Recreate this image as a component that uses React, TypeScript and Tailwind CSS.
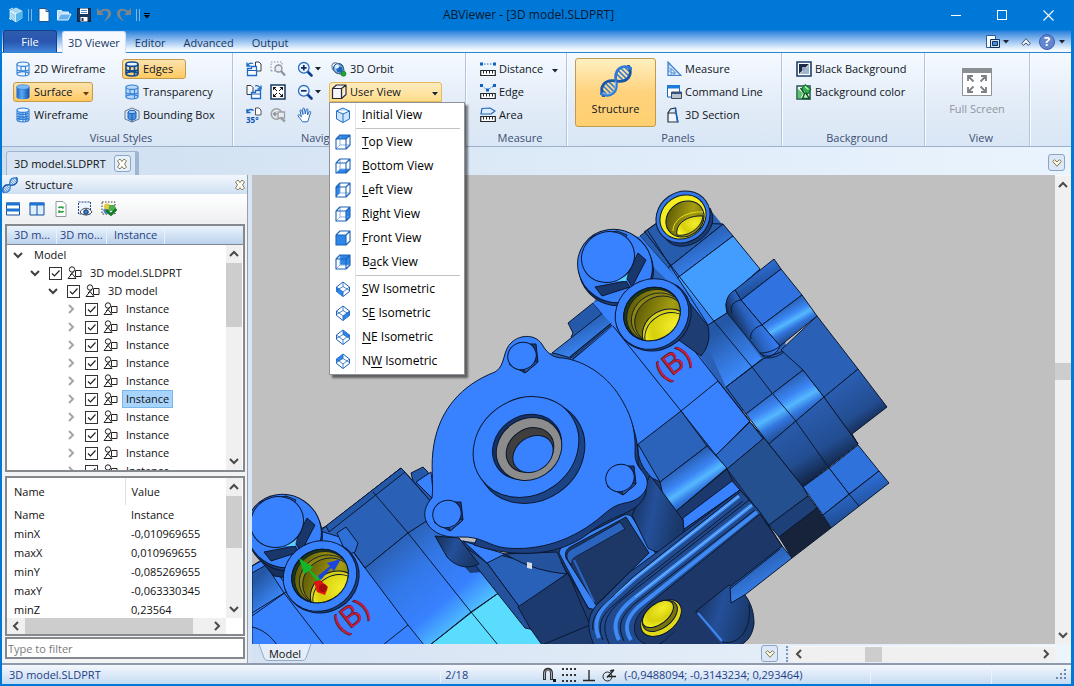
import type { ReactNode } from 'react';
import { useState } from 'react';

type IconProps = { children: ReactNode };

const Icon = ({ children }: IconProps) => (
  <svg viewBox="0 0 16 16" aria-hidden="true" fill="none" stroke="#1d63b8" className="size-4 shrink-0">
    {children}
  </svg>
);

/* ---------- ribbon icons ---------- */

const Barrel = ({ fill = 'none', grid = false, dark = false }: { fill?: string; grid?: boolean; dark?: boolean }) => (
  <Icon>
    <g stroke={dark ? '#0c4a94' : '#2f7fd6'} strokeWidth={dark ? 1.6 : 1.1}>
      <path d="M2 3.2v9.600c0 1.300 2.700 2.200 6 2.200s6-.9 6-2.200V3.200" fill={fill} />
      <ellipse cx="8" cy="3.200" rx="6" ry="2.200" fill={fill === 'none' ? '#eaf4ff' : fill} />
      <path d="M2 12.400c1-1.200 3-1.800 6-1.800s5 .6 6 1.800M6 5v5.600M10.500 5v9.500M2 9c3 1.200 9 1.200 12 0" />
      {grid && <path d="M4 4.500v9.500M8 5.500v9.500M12 4.500v9.500M2 6.500c3 1.200 9 1.200 12 0M2 11.500c3 1.200 9 1.200 12 0" />}
    </g>
  </Icon>
);

const SolidBarrel = () => (
  <Icon>
    <defs>
      <linearGradient id="solid">
        <stop offset="0" stopColor="#1565c8" />
        <stop offset=".4" stopColor="#5aa7f5" />
        <stop offset="1" stopColor="#0c4fae" />
      </linearGradient>
    </defs>
    <path d="M1.500 3v10c0 1.300 3 2.300 6.500 2.300s6.500-1 6.500-2.300V3z" fill="url(#solid)" stroke="none" />
    <ellipse cx="8" cy="3" rx="6.500" ry="2.300" fill="#7db9f7" stroke="#2b78d0" strokeWidth=".6" />
  </Icon>
);

const BoundingIcon = () => (
  <Icon>
    <path d="M1 4l7-3 7 3v8l-7 3-7-3z" stroke="#66788f" fill="#dceaf9" />
    <path d="M4 5v6c0 1 1.800 2 4 2s4-1 4-2V5z" fill="#4a90e2" stroke="#1d5fb4" />
    <ellipse cx="8" cy="5" rx="4" ry="1.600" fill="#a5cdf8" />
    <path d="M8 7v8" stroke="#1d5fb4" />
  </Icon>
);

const Pages = ({ kind }: { kind: 'up' | 'down' | 'angle' }) => (
  <Icon>
    {kind === 'angle' ? (
      <>
        <path d="M9.500 1h3.500l2 2v5H9.500z" fill="#fff" stroke="#4d5766" />
        <path d="M1 5c1.500-3 4.500-3 6.500-1.500M1 2v3.500h3.500" stroke="#1565c0" strokeWidth="1.400" />
        <text x="0" y="15.500" fontSize="8" fontWeight="700" fontFamily="Open Sans" fill="#0d55b5" stroke="none">35°</text>
      </>
    ) : kind === 'up' ? (
      <>
        <path d="M9.500 1h3.500l2 2v7H9.500z" fill="#fff" stroke="#333c4a" />
        <path d="M1.500 7.500h4v-2h5v9h-9z" fill="#fff" stroke="#1b6cc8" strokeWidth="1.300" />
        <path d="M1.500 9.500h9" />
        <path d="M1.500 4.500c1-2 3-3 5.500-2M1 1.500v3.500h3.500" stroke="#1565c0" strokeWidth="1.300" />
      </>
    ) : (
      <>
        <path d="M1 1.500h4l2 2v7H1z" fill="#fff" stroke="#333c4a" />
        <path d="M5.500 8.500h4v-2h5v8h-9z" fill="#fff" stroke="#1b6cc8" strokeWidth="1.300" />
        <path d="M5.500 10h9" />
        <path d="M9 2c2-.800 4 0 5 2M15 1.500v3.500h-3.500" stroke="#1565c0" strokeWidth="1.300" />
      </>
    )}
  </Icon>
);

const ZoomArea = () => (
  <Icon>
    <path d="M1 10V1h11v3" stroke="#8c9299" strokeDasharray="1.500 1.500" />
    <path d="M1 10h4" stroke="#8c9299" strokeDasharray="1.500 1.500" />
    <circle cx="8.500" cy="7.500" r="3.500" fill="#e8eef5" stroke="#8c9299" strokeWidth="1.300" />
    <path d="M11 10l4 4.500" stroke="#8c9299" strokeWidth="2.200" />
  </Icon>
);

const FitIcon = () => (
  <Icon>
    <path d="M1 1h14v14H1z" fill="#fff" stroke="#173a63" strokeWidth="1.500" />
    <path d="M3 3h3.500L3 6.500zM13 3H9.500L13 6.500zM3 13h3.500L3 9.500zM13 13H9.500L13 9.500z" fill="#111" stroke="none" />
    <path d="M4 4l3 3M12 4L9 7M4 12l3-3M12 12L9 9" stroke="#111" />
  </Icon>
);

const Magnifier = ({ plus = false }: { plus?: boolean }) => (
  <Icon>
    <path d="M10.500 10.500l4 4" stroke="#0e3f91" strokeWidth="2.600" strokeLinecap="round" />
    <circle cx="6.800" cy="6.800" r="5.300" fill="#eef6ff" stroke="#2c6fc0" strokeWidth="1.300" />
    <path d={plus ? 'M4 6.800h5.600M6.800 4v5.600' : 'M4 6.800h5.600'} stroke="#0b2c66" strokeWidth="1.700" />
  </Icon>
);

const PrevZoom = () => (
  <Icon>
    <circle cx="6.500" cy="7" r="5.300" fill="#e4e8ec" stroke="#9ba0a6" strokeWidth="1.500" />
    <path d="M3.500 7h4M5.500 5l-2 2 2 2" stroke="#8d9298" strokeWidth="1.300" />
    <path d="M8 5h6.500v6H8z" fill="#e9ecef" stroke="#9ba0a6" strokeWidth="1.300" />
    <path d="M10.500 10.500l4.500 4" stroke="#9ba0a6" strokeWidth="2.400" />
  </Icon>
);

const HandIcon = () => (
  <Icon>
    <path
      d="M5.500 14.800C4 12.500 2 10.500 1 8.800c-.3-1 .9-1.400 1.700-.6l1.800 1.600L3 4c-.2-1.200 1.300-1.400 1.700-.4L6 7.500 5.700 2c0-1.200 1.600-1.200 1.800 0L8.300 7l1-4.500c.3-1.100 1.700-.8 1.600.3L10.500 8l1.700-3.200c.6-.9 1.800-.4 1.500.6L12 10.500c-.4 1.700-.6 3-1.500 4.300z"
      fill="#fff"
      stroke="#2168c0"
    />
  </Icon>
);

const OrbitIcon = () => (
  <Icon>
    <circle cx="7.500" cy="7.500" r="5" fill="#8cc4f2" stroke="#123b6b" />
    <circle cx="8.500" cy="8.500" r="3" fill="#1d65b8" stroke="none" />
    <ellipse cx="7" cy="7.500" rx="7" ry="4.500" transform="rotate(40 7 7.500)" stroke="#55708e" />
    <circle cx="6" cy="5.500" r="2" fill="#e8f5ff" stroke="none" />
    <circle cx="12.500" cy="12.800" r="2.500" fill="#22a33a" stroke="#0f7323" strokeWidth=".6" />
  </Icon>
);

const BoxIcon = () => (
  <Icon>
    <path d="M1.500 4.500h9v10h-9zM1.500 4.500l4-3.500h9.500l-4.500 3.500M15 1v9.500l-4.500 4" fill="#f4f6fb" stroke="#2a2a33" strokeWidth="1.200" strokeLinejoin="round" />
  </Icon>
);

const RulerIcon = ({ kind }: { kind: 'distance' | 'edge' | 'area' }) => (
  <Icon>
    <path d="M.7 9.500h14.600v5H.7z" fill="#fff" stroke="#23272e" strokeWidth="1.200" />
    <path d="M3.500 9.500v3M6.500 9.500v3M9.500 9.500v3M12.500 9.500v3" stroke="#23272e" />
    {kind === 'distance' && (
      <>
        <path d="M1 3h14" strokeDasharray="1.500 1.500" />
        <path d="M0 1.500h3v3H0zM13 1.500h3v3h-3z" fill="#0f62c4" stroke="none" />
      </>
    )}
    {kind === 'edge' && (
      <>
        <path d="M2 2l5 4 7-4" strokeDasharray="1.500 1.500" />
        <path d="M0 0h3v3H0zM6 4.500h3v3H6zM13 0h3v3h-3z" fill="#0f62c4" stroke="none" />
      </>
    )}
    {kind === 'area' && <path d="M2 1.500l8-.5 5 3-4 3H1z" fill="#dcecff" strokeWidth="1.200" />}
  </Icon>
);

const DnaIcon = ({ big = false }: { big?: boolean }) => (
  <svg viewBox="0 0 32 32" aria-hidden="true" fill="none" className={big ? 'size-8 shrink-0' : 'size-4 shrink-0'}>
    <g transform="translate(16 16) rotate(-45)">
      <path d="M-16-3v6M-12.500-5.500v11M-9-6v12M-5.500-5v10M5.500-5v10M9-6v12M12.500-5.500v11M16-3v6" stroke="#3a7fd0" strokeWidth="1.600" />
      <path d="M-20 3c3-11 13-13 20-3s17 8 20-3" stroke="#1a55a6" strokeWidth="2.800" />
      <path d="M-20-3c3 11 13 13 20 3s17-8 20 3" stroke="#2e7ad4" strokeWidth="2.800" />
      <path d="M-18-1c3 8 11 9 17 1" stroke="#9cc8f5" strokeWidth=".8" />
    </g>
  </svg>
);

const TriangleRuler = () => (
  <Icon>
    <path d="M2 1v13.500h13z" fill="#cfe4fb" stroke="#3d7fcb" strokeWidth="1.200" />
    <path d="M5 7.500v4.500h4.500z" fill="#f5faff" stroke="#3d7fcb" />
    <path d="M2 4h1.500M2 7h1.500M2 10h1.500M5 14.500V13M8 14.500V13" stroke="#3d7fcb" />
  </Icon>
);

const CommandIcon = () => (
  <Icon>
    <path d="M1.500 2h12v11h-12z" fill="#fff" stroke="#1668c2" />
    <path d="M1 1h13v3.500H1z" fill="#1c7ad8" stroke="none" />
    <path d="M5.500 8h10v6.500h-10z" fill="#b9c3cf" stroke="#3b4a5c" />
    <path d="M5.500 8h10v2h-10z" fill="#35527a" stroke="none" />
  </Icon>
);

const SectionIcon = () => (
  <Icon>
    <path d="M2 6h8l2 9H2z" fill="#f1f4f8" stroke="#2b3038" strokeWidth="1.200" />
    <path d="M2 6l2.500-4L9.500 1v4" stroke="#2b3038" strokeWidth="1.200" />
    <path d="M9.500 1l2 14" stroke="#1263c8" strokeWidth="1.500" />
  </Icon>
);

const BlackBgIcon = () => (
  <Icon>
    <path d="M1 1h14v14H1z" fill="#fff" stroke="#1d3f6e" strokeWidth="1.600" />
    <path d="M3 3h10L3 13z" fill="#1c2b40" stroke="none" />
    <path d="M6 6h4v4H6z" fill="#8fa5c0" stroke="none" />
    <path d="M4 13h9V4z" fill="#9fb4cd" stroke="none" />
  </Icon>
);

const ColorBgIcon = () => (
  <Icon>
    <path d="M1 2h13v13H1z" fill="#fff" stroke="#1d5a4a" strokeWidth="1.500" />
    <path d="M2 5v9h3l2-5z" fill="#58c46a" stroke="none" />
    <path d="M6 4l3-3.500 6 4.500-3 5-4-1z" fill="#2fae4a" stroke="#14602a" />
    <path d="M9 2.500l3.500 3" stroke="#c5f3cc" strokeWidth="1.400" />
    <path d="M4.500 4l4 5.500-2 5h7l-4-6" stroke="#0c5121" strokeWidth="1.400" fill="#bff0c6" />
  </Icon>
);

const FullScreenIcon = () => (
  <svg viewBox="0 0 32 32" aria-hidden="true" fill="none" className="size-8 shrink-0">
    <path d="M1.500 2.500h29v27h-29z" fill="#fff" stroke="#8f9499" />
    <path d="M1 2h30v5H1z" fill="#8a8f94" />
    <path d="M7 15V10h5M7 10l5.500 5.500M25 15V10h-5M25 10l-5.500 5.500M7 21v5h5M7 26l5.500-5.500M25 21v5h-5M25 26l-5.500-5.500" stroke="#7c8186" strokeWidth="1.800" />
  </svg>
);

/* ---------- view cube icons ---------- */

const faces: Record<string, string> = {
  top: 'M1 5l4-4h10l-4 4z',
  bottom: 'M1 15l4-4h10l-4 4z',
  left: 'M1 5l4-4v10l-4 4z',
  right: 'M11 5l4-4v10l-4 4z',
  front: 'M1 5h10v10H1z',
  back: 'M5 1h10v10H5z',
  sw: 'M1.500 6v4.500L8 15.500V11z',
  se: 'M14.500 6v4.500L8 15.500V11z',
  ne: 'M8 1l6.500 5v3L8 5.500z',
  nw: 'M8 1L1.500 6v3L8 5.500z',
};

const ViewIcon = ({ face }: { face: string }) => {
  if (face === 'initial')
    return (
      <Icon>
        <path d="M8 1l6.500 3v8L8 15.500 1.500 12V4zM1.500 4L8 7l6.500-3M8 7v8.500" fill="#cfe3fa" stroke="#1f6fcb" strokeLinejoin="round" />
      </Icon>
    );
  if (face.length === 2)
    return (
      <Icon>
        <path d="M8 1l6.500 5v4.500L8 15.500 1.500 10.500V6z" fill="#fff" strokeLinejoin="round" />
        <path d={faces[face]} fill="#2f86e8" stroke="none" />
        <path d="M1.500 6L8 11l6.500-5M8 11v4.500M8 1v4.500M8 5.500l-6.500 4M8 5.500l6.500 4" strokeWidth=".8" />
      </Icon>
    );
  return (
    <Icon>
      <path d={faces[face]} fill="#2f86e8" stroke="none" />
      <path d="M5 1v10h10M5 11l-4 4" stroke={face === 'front' ? 'none' : '#7aaae0'} strokeWidth=".9" />
      <path d="M1 5h10v10H1zM1 5l4-4h10l-4 4M15 1v10l-4 4" strokeLinejoin="round" strokeWidth="1.100" />
    </Icon>
  );
};

/* ---------- shared pieces ---------- */

const Caret = ({ className = 'text-[#1b2430]' }: { className?: string }) => (
  <svg viewBox="0 0 6 4" aria-hidden="true" className={`h-1 w-1.5 shrink-0 ${className}`}>
    <path d="M0 0h6L3 3.500z" fill="currentColor" />
  </svg>
);

const Chevron = ({ dir, className = 'text-[#4a4a4a]' }: { dir: 'up' | 'down' | 'left' | 'right'; className?: string }) => {
  const d = { up: 'M1 7l4-4 4 4', down: 'M1 3l4 4 4-4', left: 'M7 1L3 5l4 4', right: 'M3 1l4 4-4 4' }[dir];
  return (
    <svg viewBox="0 0 10 10" aria-hidden="true" fill="none" className={`size-2.5 shrink-0 ${className}`}>
      <path d={d} stroke="currentColor" strokeWidth="2" />
    </svg>
  );
};

const CrossBadge = () => (
  <svg viewBox="0 0 10 10" aria-hidden="true" className="size-2.5">
    <path d="M.5 2L2 .5h1.500L5 2.500 6.500.5H8L9.500 2 7.500 5l2 3L8 9.500H6.500L5 7.500 3.500 9.500H2L.5 8l2-3z" fill="#fffef2" stroke="#6f6a55" strokeWidth=".9" />
  </svg>
);

const DownBadge = ({ label }: { label: string }) => (
  <button type="button" aria-label={label} className="flex size-[17px] items-center justify-center rounded-[3px] border border-[#8aa4c8] bg-[#dce8f6]">
    <svg viewBox="0 0 10 8" aria-hidden="true" className="h-2 w-2.5">
      <path d="M.7 2.500L2.500.7 5 3 7.500.7l1.800 1.800L5 7.300z" fill="#fffbe0" stroke="#6f6a4a" strokeWidth=".9" />
    </svg>
  </button>
);

const Cmd = ({ icon, children }: { icon: ReactNode; children: ReactNode }) => (
  <button type="button" className="flex h-5 items-center gap-[3px] rounded-[3px] border border-transparent px-px whitespace-nowrap">
    {icon}
    {children}
  </button>
);

const Group = ({ label, className, children }: { label: string; className: string; children: ReactNode }) => (
  <section aria-label={label} className={`flex shrink-0 flex-col border-r border-[#b4c4da] shadow-[1px_0_0_#f8fbff] ${className}`}>
    <div className="flex min-h-0 flex-1 pt-1">{children}</div>
    <h2 className="h-4 pl-2 text-center whitespace-nowrap text-[#3c4f72]">{label}</h2>
  </section>
);

const Col = ({ className = '', children }: { className?: string; children: ReactNode }) => (
  <div className={`flex flex-col items-start gap-[3px] pt-0.5 ${className}`}>{children}</div>
);

const hot = 'border-[#c29a4b] bg-linear-to-b from-[#fce3ac] to-[#ffc95f]';

/* ---------- title bar and ribbon ---------- */

const TitleBar = () => (
  <header className="grid h-[30px] shrink-0 grid-cols-[1fr_auto_1fr] items-center bg-[#0078d7]">
    <div className="flex items-center gap-1 pl-1.5">
      <Icon>
        <path d="M8 1l6 3v7l-6 4-6-4V4z" fill="#9fd8f5" stroke="#e4f6ff" strokeWidth=".7" />
        <path d="M2 4l6 3 6-3M8 7v8" stroke="#fff" />
        <path d="M8 7l6-3v7l-6 4z" fill="#55b4e6" stroke="none" />
        <path d="M1 3l4-2M3 13l-2-2" stroke="#dff4ff" />
      </Icon>
      <span className="h-3 w-1 border-x border-[#7fb6e6]" />
      <button type="button" aria-label="New">
        <Icon>
          <path d="M3 1.500h7l3 3v10H3z" fill="#fff" stroke="#24578f" />
          <path d="M10 1.500v3h3" stroke="#24578f" />
        </Icon>
      </button>
      <button type="button" aria-label="Open">
        <Icon>
          <path d="M1.500 13V3.500h4l1 1.500h6v2" fill="#b8dcf6" stroke="#e6f4ff" />
          <path d="M1.500 13L4.500 7H15l-3 6z" fill="#63b0ee" stroke="#e6f4ff" />
        </Icon>
      </button>
      <button type="button" aria-label="Save">
        <Icon>
          <path d="M1.500 1.500h13v13h-13z" fill="#17375e" stroke="#0c2340" />
          <path d="M4 1.500h8V7H4zM4.500 10h7v4.500h-7z" fill="#fff" stroke="none" />
          <path d="M5.500 11h2v3h-2z" fill="#17375e" stroke="none" />
          <path d="M5 3.500h6M5 5.500h6" stroke="#4d8ccc" />
        </Icon>
      </button>
      <button type="button" aria-label="Undo">
        <Icon>
          <path d="M1 1v7h7L5.500 5.500C8 3 12.500 3 12 7c-.3 3-2 5-4.500 7.500C12 12.500 15 10 15 6.500 15 1 8 .5 4 4z" fill="#7c858c" stroke="none" />
        </Icon>
      </button>
      <button type="button" aria-label="Redo">
        <Icon>
          <path d="M15 1v7H8l2.500-2.500C8 3 3.500 3 4 7c.3 3 2 5 4.500 7.500C4 12.500 1 10 1 6.500 1 1 8 .5 12 4z" fill="#7c858c" stroke="none" />
        </Icon>
      </button>
      <span className="h-3 w-1 border-x border-[#7fb6e6]" />
      <button type="button" aria-label="Customize quick access" className="mt-0.5 flex flex-col items-center gap-px">
        <span className="h-px w-1.5 bg-black" />
        <Caret className="text-black" />
      </button>
    </div>
    <h1 className="pr-4 text-[12px] whitespace-pre text-[#08182e]">ABViewer - [3D model.SLDPRT]</h1>
    <div className="flex justify-end text-white">
      <button type="button" aria-label="Minimize" className="flex h-[30px] w-[46px] items-center justify-center">
        <span className="h-px w-2.5 bg-white" />
      </button>
      <button type="button" aria-label="Maximize" className="flex h-[30px] w-[46px] items-center justify-center">
        <span className="size-2.5 border border-white" />
      </button>
      <button type="button" aria-label="Close" className="flex h-[30px] w-[46px] items-center justify-center">
        <svg viewBox="0 0 11 11" aria-hidden="true" className="size-[11px]">
          <path d="M.5.5l10 10M10.500.5l-10 10" stroke="#fff" strokeWidth="1.100" />
        </svg>
      </button>
    </div>
  </header>
);

const TabRow = () => (
  <nav aria-label="Ribbon tabs" className="flex h-[23px] shrink-0 items-end border-b border-[#2c86d3] bg-linear-to-b from-[#0b7bd8] to-[#f3f9ff] to-90% text-[#17375f]">
    <button type="button" className="ml-px h-[22px] w-[54px] rounded-t-[3px] border border-b-0 border-[#173f8a] bg-linear-to-b from-[#2d5cae] via-[#2a56b0] to-[#3f84d8] text-white">
      File
    </button>
    <button type="button" className="-mb-px ml-[5px] h-[22px] rounded-t-[3px] border border-b-0 border-[#cfe0f2] bg-[#f6faff] px-[5px]">3D Viewer</button>
    <button type="button" className="h-[19px] px-[9px]">Editor</button>
    <button type="button" className="h-[19px] px-[9px]">Advanced</button>
    <button type="button" className="h-[19px] px-[9px]">Output</button>
    <div className="ml-auto flex h-[21px] items-center gap-2 pr-1.5">
      <button type="button" aria-label="Windows" className="mr-1 flex items-center gap-0.5">
        <Icon>
          <path d="M1.500 1.500h9v12h-9z" fill="#fff" stroke="#22609f" />
          <path d="M5.500 5.500h9v8h-9z" fill="#cfe3f8" stroke="#12325c" />
          <path d="M7.500 7.500h5v4h-5z" fill="#3f8ee0" stroke="#12325c" />
        </Icon>
        <Caret />
      </button>
      <button type="button" aria-label="Collapse ribbon">
        <svg viewBox="0 0 10 8" aria-hidden="true" className="h-2 w-2.5">
          <path d="M.7 5.500L5 .7l4.300 4.800-1.800 1.800L5 5 2.500 7.300z" fill="#e8eef5" stroke="#46566b" />
        </svg>
      </button>
      <button type="button" aria-label="Help" className="flex items-center gap-1">
        <span className="flex size-4 items-center justify-center rounded-full border border-[#3c5fae] bg-[#6486cf] text-[13px] leading-none font-bold text-white">?</span>
        <Caret />
      </button>
    </div>
  </nav>
);

type MenuItem = { face: string; before: string; key: string; after: string; divider?: boolean };

const menuItems: MenuItem[] = [
  { face: 'initial', before: '', key: 'I', after: 'nitial View' },
  { face: 'top', before: '', key: 'T', after: 'op View', divider: true },
  { face: 'bottom', before: '', key: 'B', after: 'ottom View' },
  { face: 'left', before: '', key: 'L', after: 'eft View' },
  { face: 'right', before: '', key: 'R', after: 'ight View' },
  { face: 'front', before: '', key: 'F', after: 'ront View' },
  { face: 'back', before: 'B', key: 'a', after: 'ck View' },
  { face: 'sw', before: '', key: 'S', after: 'W Isometric', divider: true },
  { face: 'se', before: 'S', key: 'E', after: ' Isometric' },
  { face: 'ne', before: '', key: 'N', after: 'E Isometric' },
  { face: 'nw', before: 'N', key: 'W', after: ' Isometric' },
];

const ViewMenu = () => (
  <div role="menu" aria-label="User View" className="absolute top-full left-0 z-20 w-[136px] border border-[#8f9399] bg-white pb-px text-[12px] shadow-[3px_3px_2px_rgba(0,0,0,0.5)]">
    {menuItems.map((m) => (
      <div key={m.face} className="grid grid-cols-[26px_1fr] items-stretch">
        {m.divider && (
          <>
            <span className="border-r border-[#e2e3e6]" />
            <hr className="my-px mr-1 border-[#bfc2c7]" />
          </>
        )}
        <button type="button" role="menuitem" className="col-span-2 grid h-6 grid-cols-[26px_1fr] items-center text-left text-black">
          <span className="flex h-6 items-center border-r border-[#e2e3e6] pl-[5px]">
            <ViewIcon face={m.face} />
          </span>
          <span className="pl-1.5 whitespace-pre">
            {m.before}
            <span className="underline underline-offset-2">{m.key}</span>
            {m.after}
          </span>
        </button>
      </div>
    ))}
  </div>
);

const IconBtn = ({ label, caret = false, children }: { label: string; caret?: boolean; children: ReactNode }) => (
  <button type="button" aria-label={label} className="flex h-5 items-center gap-0.5">
    {children}
    {caret && <Caret />}
  </button>
);

const Ribbon = () => {
  const [open, setOpen] = useState(true);
  return (
    <div className="flex h-[94px] shrink-0 border-b border-[#9db1cd] bg-linear-to-b from-[#f5faff] via-[#e4edf8] to-[#d9e6f5] text-[#10151c]">
      <Group label="Visual Styles" className="w-[231px]">
        <Col className="ml-[11px] w-[109px]">
          <Cmd icon={<Barrel />}>2D Wireframe</Cmd>
          <button type="button" className={`flex h-5 w-20 items-center gap-[3px] rounded-[3px] border px-px ${hot}`}>
            <SolidBarrel />
            Surface
            <span className="ml-auto pt-1 pr-0.5"><Caret className="text-[#6b3c00]" /></span>
          </button>
          <Cmd icon={<Barrel grid />}>Wireframe</Cmd>
        </Col>
        <Col>
          <button type="button" aria-pressed="true" className={`flex h-5 w-16 items-center gap-[3px] rounded-[3px] border px-px ${hot}`}>
            <Barrel dark />
            Edges
          </button>
          <Cmd icon={<Barrel fill="#b9d8f7" />}>Transparency</Cmd>
          <Cmd icon={<BoundingIcon />}>Bounding Box</Cmd>
        </Col>
      </Group>

      <Group label="Navigation and View" className="w-[233px]">
        <Col className="ml-[13px] w-6">
          <IconBtn label="Rotate page left"><Pages kind="up" /></IconBtn>
          <IconBtn label="Rotate page right"><Pages kind="down" /></IconBtn>
          <IconBtn label="Rotate by 35 degrees"><Pages kind="angle" /></IconBtn>
        </Col>
        <Col className="w-[27px]">
          <IconBtn label="Zoom window"><ZoomArea /></IconBtn>
          <IconBtn label="Fit to window"><FitIcon /></IconBtn>
          <IconBtn label="Previous zoom"><PrevZoom /></IconBtn>
        </Col>
        <Col className="w-8">
          <IconBtn label="Zoom in" caret><Magnifier plus /></IconBtn>
          <IconBtn label="Zoom out" caret><Magnifier /></IconBtn>
          <IconBtn label="Pan"><HandIcon /></IconBtn>
        </Col>
        <Col>
          <Cmd icon={<OrbitIcon />}>3D Orbit</Cmd>
          <div className="relative">
            <button
              type="button"
              aria-haspopup="menu"
              aria-expanded={open}
              onClick={() => setOpen(!open)}
              className="flex h-5 w-[113px] items-center gap-[3px] rounded-t-[3px] border border-[#e3b95c] bg-linear-to-b from-[#fdecc0] to-[#ffdc8a] px-px"
            >
              <BoxIcon />
              User View
              <span className="ml-auto pt-1 pr-0.5"><Caret /></span>
            </button>
            {open && <ViewMenu />}
          </div>
        </Col>
      </Group>

      <Group label="Measure" className="w-[101px]">
        <Col className="ml-3">
          <Cmd icon={<RulerIcon kind="distance" />}>
            Distance
            <span className="pt-1 pl-1.5"><Caret /></span>
          </Cmd>
          <Cmd icon={<RulerIcon kind="edge" />}>Edge</Cmd>
          <Cmd icon={<RulerIcon kind="area" />}>Area</Cmd>
        </Col>
      </Group>

      <Group label="Panels" className="w-[215px]">
        <button
          type="button"
          aria-pressed="true"
          className="mt-px ml-2 flex h-[69px] w-[81px] flex-col items-center gap-1 rounded-[3px] border border-[#c29a4b] bg-linear-to-b from-[#fff0c0] via-[#ffd27c] to-[#ffcf70] pt-1.5"
        >
          <DnaIcon big />
          <span className="leading-4">Structure</span>
        </button>
        <Col className="ml-2">
          <Cmd icon={<TriangleRuler />}>Measure</Cmd>
          <Cmd icon={<CommandIcon />}>Command Line</Cmd>
          <Cmd icon={<SectionIcon />}>3D Section</Cmd>
        </Col>
      </Group>

      <Group label="Background" className="w-[143px]">
        <Col className="ml-3">
          <Cmd icon={<BlackBgIcon />}>Black Background</Cmd>
          <Cmd icon={<ColorBgIcon />}>Background color</Cmd>
        </Col>
      </Group>

      <Group label="View" className="w-[105px]">
        <button type="button" disabled className="flex flex-1 flex-col items-center gap-[3px] pt-[9px] text-[#8f979f]">
          <FullScreenIcon />
          <span className="leading-4">Full Screen</span>
        </button>
      </Group>
    </div>
  );
};

/* ---------- scroll bars ---------- */

const VScroll = ({ children, className = '' }: { children: ReactNode; className?: string }) => (
  <div aria-hidden="true" className={`flex w-4 shrink-0 flex-col items-center bg-[#f0f0f0] ${className}`}>
    <span className="flex h-[18px] items-center"><Chevron dir="up" /></span>
    <div className="flex min-h-0 w-full flex-1 flex-col">{children}</div>
    <span className="flex h-[18px] items-center"><Chevron dir="down" /></span>
  </div>
);

const HScroll = ({ children, className = '' }: { children: ReactNode; className?: string }) => (
  <div aria-hidden="true" className={`flex h-4 items-center bg-[#f0f0f0] ${className}`}>
    <span className="flex w-[18px] justify-center"><Chevron dir="left" /></span>
    <div className="flex h-full min-w-0 flex-1">{children}</div>
    <span className="flex w-[18px] justify-center"><Chevron dir="right" /></span>
  </div>
);

/* ---------- structure panel ---------- */

type Node = { level: number; text: string; open?: boolean; selected?: boolean };

const nodes: Node[] = [
  { level: 0, text: 'Model', open: true },
  { level: 1, text: '3D model.SLDPRT', open: true },
  { level: 2, text: '3D model', open: true },
  ...Array.from({ length: 10 }, (_, i) => ({ level: 3, text: 'Instance', selected: i === 5 })),
];

const indents = ['pl-1', 'pl-[21px]', 'pl-[39px]', 'pl-[57px]'];

const TreeRow = ({ node, id }: { node: Node; id: string }) => (
  <li role="treeitem" aria-level={node.level + 1} aria-expanded={!!node.open} aria-selected={!!node.selected} className={`flex h-[18px] items-center ${indents[node.level]}`}>
    <span className="flex w-[14px] justify-center">
      <Chevron dir={node.open ? 'down' : 'right'} className={node.open ? 'text-[#404040]' : 'text-[#a6a6a6]'} />
    </span>
    {node.level > 0 ? (
      <>
        <span className="ml-[7px] grid size-[13px]">
          <input id={id} type="checkbox" defaultChecked className="peer col-start-1 row-start-1 size-[13px] appearance-none border border-[#333] bg-white" />
          <svg viewBox="0 0 13 13" aria-hidden="true" className="pointer-events-none invisible col-start-1 row-start-1 size-[13px] peer-checked:visible">
            <path d="M3 6.500L5.500 9l5-5.500" fill="none" stroke="#222" strokeWidth="1.200" />
          </svg>
        </span>
        <label htmlFor={id} className="ml-[5px] flex items-center gap-1 whitespace-nowrap">
          <svg viewBox="0 0 15 14" aria-hidden="true" fill="none" stroke="#222" className="h-[14px] w-[15px]">
            <circle cx="5" cy="3.500" r="2.700" />
            <path d="M1 12.500L5 7.500l4 5zM3 9L7 5.500M8.500 4.500H14v6H8.500z" />
          </svg>
          <span className={node.selected ? 'border border-[#7ab8ec] bg-[#a8d4fb] px-[3px] leading-4' : 'px-1'}>{node.text}</span>
        </label>
      </>
    ) : (
      <span className="pl-[9px]">{node.text}</span>
    )}
  </li>
);

const props = [
  ['Name', 'Instance'],
  ['minX', '-0,010969655'],
  ['maxX', '0,010969655'],
  ['minY', '-0,085269655'],
  ['maxY', '-0,063330345'],
  ['minZ', '0,23564'],
];

const StructurePanel = () => (
  <aside aria-label="Structure" className="flex w-[246px] shrink-0 flex-col border-r border-[#9a9ea5] bg-[#f2f3f5] text-[#111]">
    <div className="flex h-[19px] shrink-0 items-center bg-linear-to-b from-[#f2f7fd] to-[#cfe0f2]">
      <DnaIcon />
      <h2 className="pl-[7px]">Structure</h2>
      <button type="button" aria-label="Close panel" className="mr-[2px] ml-auto"><CrossBadge /></button>
    </div>
    <div className="flex h-[29px] shrink-0 items-center gap-2 bg-linear-to-b from-white to-[#eeeff1] pl-[3px]">
      <button type="button" aria-label="Split horizontally">
        <Icon>
          <path d="M1.500 2h13v12h-13z" fill="#fff" stroke="#134f9b" />
          <path d="M1 1.500h14V4.500H1zM1 7.500h14v3H1z" fill="#1e74d2" stroke="none" />
        </Icon>
      </button>
      <button type="button" aria-label="Split vertically">
        <Icon>
          <path d="M1 2h14v12H1zM8 2v12" fill="#dfeefd" stroke="#134f9b" />
          <path d="M.5 1.500h15V4.500H.5z" fill="#1e74d2" stroke="none" />
        </Icon>
      </button>
      <button type="button" aria-label="Refresh">
        <Icon>
          <path d="M3 .5h7l3 3v12H3z" fill="#fff" stroke="#8e98a3" />
          <path d="M5.500 7c1-1.500 3.500-1.500 4.500.500v-2M10.500 10c-1 1.500-3.500 1.500-4.500-.500v2.500" stroke="#1f9a35" strokeWidth="1.400" />
        </Icon>
      </button>
      <button type="button" aria-label="Show selected">
        <Icon>
          <path d="M1.500 1h12v12h-12z" fill="#eef5fc" stroke="#1b4b86" strokeDasharray="2 1" />
          <path d="M3 11c3-5 9-5 12 0-3 4-9 4-12 0z" fill="#fff" stroke="#3c4654" />
          <circle cx="9" cy="11" r="2.300" fill="#3a7fca" stroke="#12325c" />
        </Icon>
      </button>
      <button type="button" aria-label="Apply selection">
        <Icon>
          <path d="M1 1h13v12H1z" stroke="#333" strokeDasharray="1.500 1.500" />
          <path d="M2 9L6 5l3 4-2 4H4z" fill="#4f86c8" stroke="none" />
          <circle cx="6" cy="5.500" r="3" fill="#e5c73c" stroke="none" />
          <path d="M8 4h6v6H8z" fill="#4fae50" stroke="none" />
          <path d="M5 9l5 4.500L15.500 8" stroke="#0f7a22" strokeWidth="2.600" />
        </Icon>
      </button>
    </div>

    <div className="mr-0.5 ml-[3px] mt-px flex min-h-0 flex-1 flex-col border-2 border-double border-[#85888d] bg-white">
      <div className="flex h-[19px] shrink-0 border-b border-[#7f8894] bg-linear-to-b from-[#eaf3fc] to-[#bcd2ec] leading-[18px] whitespace-nowrap text-[#26437f]">
        <span className="w-[50px] border-r border-[#e8f1fb] pl-[7px]">3D m...</span>
        <span className="w-[50px] border-r border-[#e8f1fb] pl-[3px]">3D mo...</span>
        <span className="w-[58px] border-r border-[#e8f1fb] pl-[7px]">Instance</span>
      </div>
      <div className="flex min-h-0 flex-1">
        <ul role="tree" className="min-w-0 flex-1 overflow-hidden pt-px">
          {nodes.map((n, i) => (
            <TreeRow key={i} node={n} id={`node-${i}`} />
          ))}
        </ul>
        <VScroll className="mr-px">
          <span className="h-16 bg-[#cdcdcd]" />
        </VScroll>
      </div>
    </div>

    <div className="mr-0.5 ml-[3px] mt-1 flex h-[160px] shrink-0 flex-col border-2 border-double border-[#85888d] bg-white">
      <div className="flex min-h-0 flex-1">
        <div className="min-w-0 flex-1 overflow-hidden">
          <table className="w-full table-fixed text-left">
            <thead>
              <tr className="h-[27px]">
                <th scope="col" className="w-[118px] border-r border-[#e0e0e0] pl-[7px] font-normal">Name</th>
                <th scope="col" className="pl-1.5 font-normal">Value</th>
              </tr>
            </thead>
            <tbody>
              {props.map(([k, v]) => (
                <tr key={k} className="h-[19px]">
                  <td className="pl-[7px]">{k}</td>
                  <td className="pl-1.5">{v}</td>
                </tr>
              ))}
            </tbody>
          </table>
        </div>
        <VScroll className="mr-px">
          <span className="h-[52px] bg-[#cdcdcd]" />
        </VScroll>
      </div>
      <HScroll className="mr-[17px]">
        <span className="w-[92%] bg-[#cdcdcd]" />
      </HScroll>
    </div>

    <input
      type="text"
      aria-label="Filter properties"
      placeholder="Type to filter"
      className="mr-0.5 mb-1 ml-[3px] mt-px h-[22px] shrink-0 border-2 border-double border-[#85888d] bg-white px-px placeholder:text-[#7b7b7b]"
    />
  </aside>
);

/* ---------- 3D model ---------- */

const Bolt = ({ x, y }: { x: number; y: number }) => (
  <g transform={`translate(${x} ${y})`}>
    <path d="M-13 8L3 17 16 6 14-12 6-12z" fill="#183a74" />
    <path d="M3 17L16 6l-2-1L2 13z" fill="#285cb0" />
    <ellipse rx="14.500" ry="13.500" transform="rotate(-30)" fill="#3881ff" />
  </g>
);

const BigBolt = ({ x, y }: { x: number; y: number }) => (
  <g transform={`translate(${x} ${y})`}>
    <ellipse cx="8" cy="12" rx="38" ry="36" fill="#1c3d77" transform="rotate(35 8 12)" />
    <ellipse cx="7" cy="9" rx="38" ry="36" fill="#3780fb" transform="rotate(35 7 9)" />
    <path d="M-20-12l4-9 25-5 10 4-8 12z" fill="#2a64ba" />
    <path d="M30-4l8 7-14 27-6-10zM-13 30l31-6 4 6-28 9z" fill="#19376a" />
    <path d="M8 24l12-9-2 9z" fill="#57d2ff" stroke="none" />
    <ellipse rx="27" ry="25" transform="rotate(-30)" fill="#3881ff" />
  </g>
);

const Port = ({ x, y }: { x: number; y: number }) => (
  <g transform={`translate(${x} ${y})`}>
    <ellipse cx="1" cy="2" rx="38" ry="35" transform="rotate(-30)" fill="#1c4080" />
    <ellipse rx="37.500" ry="34.500" transform="rotate(-30)" fill="#3881ff" />
    <ellipse rx="29" ry="26" transform="rotate(-30)" fill="#1a3a12" />
    <g clipPath="url(#bore)">
      <ellipse cx="1" cy="2" rx="28" ry="25" transform="rotate(-30)" fill="url(#brass)" strokeWidth=".8" />
      <ellipse cx="3" cy="6" rx="27" ry="24" transform="rotate(-30)" fill="#8d8512" strokeWidth=".8" />
      <ellipse cx="4" cy="9" rx="26" ry="23" transform="rotate(-30)" fill="url(#brass)" strokeWidth=".8" />
      <ellipse cx="4" cy="22" rx="25" ry="21" transform="rotate(-30)" fill="#d8d018" />
      <ellipse cx="4" cy="25" rx="24" ry="20" transform="rotate(-30)" fill="url(#glow)" strokeWidth=".9" />
    </g>
    <ellipse rx="29" ry="26" transform="rotate(-30)" />
  </g>
);

const Model3D = () => (
  <svg
    viewBox="252 175 803 470"
    preserveAspectRatio="xMinYMin slice"
    role="img"
    aria-label="Pump housing model"
    className="block h-full w-full"
    stroke="#0b1830"
    strokeWidth="1"
    strokeLinejoin="round"
    fill="none"
  >
    <defs>
      <clipPath id="bore">
        <ellipse rx="29" ry="26" transform="rotate(-30)" />
      </clipPath>
      <linearGradient id="sweep" gradientUnits="userSpaceOnUse" x1="395" y1="545" x2="470" y2="632">
        <stop offset="0" stopColor="#2b63ba" />
        <stop offset=".3" stopColor="#3378e8" />
        <stop offset=".65" stopColor="#3881ff" />
        <stop offset="1" stopColor="#5adcff" />
      </linearGradient>
      <linearGradient id="tube" x1=".3" y1=".2" x2=".7" y2=".85">
        <stop offset="0" stopColor="#2455a3" />
        <stop offset=".35" stopColor="#3b86f5" />
        <stop offset=".5" stopColor="#55b8ff" />
        <stop offset=".65" stopColor="#3377e0" />
        <stop offset="1" stopColor="#173768" />
      </linearGradient>
      <linearGradient id="band" x1=".3" y1=".2" x2=".7" y2=".85">
        <stop offset="0" stopColor="#2457a6" />
        <stop offset="1" stopColor="#3d8cff" />
      </linearGradient>
      <linearGradient id="fade" x1=".3" y1=".1" x2=".75" y2=".9">
        <stop offset="0" stopColor="#2b60b5" />
        <stop offset=".6" stopColor="#234d91" />
        <stop offset="1" stopColor="#0a1326" />
      </linearGradient>
      <linearGradient id="edge" x1=".35" y1=".2" x2=".65" y2=".8">
        <stop offset="0" stopColor="#2f72dc" />
        <stop offset="1" stopColor="#1d478a" />
      </linearGradient>
      <linearGradient id="round" x1=".25" y1=".65" x2=".65" y2=".4">
        <stop offset="0" stopColor="#16305c" />
        <stop offset=".5" stopColor="#2860bb" />
        <stop offset="1" stopColor="#347bf0" />
      </linearGradient>
      <linearGradient id="wall" x1="0" y1="0" x2="1" y2=".3">
        <stop offset="0" stopColor="#152c54" />
        <stop offset=".5" stopColor="#24509a" />
        <stop offset="1" stopColor="#1a3869" />
      </linearGradient>
      <linearGradient id="brass" x1="0" y1="0" x2="1" y2="1">
        <stop offset="0" stopColor="#4d4a05" />
        <stop offset=".6" stopColor="#a59d10" />
        <stop offset="1" stopColor="#6d680a" />
      </linearGradient>
      <radialGradient id="glow" cx=".7" cy=".4" r=".8">
        <stop offset="0" stopColor="#f3ee2c" />
        <stop offset=".6" stopColor="#d6cf0c" />
        <stop offset="1" stopColor="#fffb2a" />
      </radialGradient>
    </defs>
    <rect x="252" y="175" width="4000" height="3000" fill="#c0c0c0" stroke="none" />

    {/* left arm */}
    <path d="M252 566l76-41 73-57 34 36 30 60 80 81H252z" fill="#3881ff" />
    <path d="M320 531l81-63 34 38-8 15-19 12-43 35-22-30z" fill="#2a61b6" />
    <path d="M326 526l75-58 4 4-76 60z" fill="#2458a8" />
    <path d="M365 568l43-35 20-13 30 18 42 54-28 20-42 33h-7z" fill="url(#sweep)" stroke="none" />
    <path d="M500 592l-28 20-42 33h114l-12-15z" fill="#5adcff" />
    <path d="M252 573l14-8 18 28-32 20z" fill="url(#band)" />
    <path d="M252 566l14-9 20 28M252 616l34-24M373 492l35 41 63 79 27 33M343 537l22 31 43 57 16 20M365 568l43-35 20-13M383 645l25-20M284 593l40 52M430 645l41-33 29-20M252 627c10 2 19 9 25 18" />
    <path d="M337 533l9-6 12 16-3 9-8 3z" fill="#2f70d8" />
    <path d="M411 473l12-6 5 5 5 32-20-23z" fill="#2458a8" />
    <path d="M416 482l15-10 3 28z" fill="#3881ff" />
    <path d="M260 560c10 8 26 12 38 6l-10 12-14-2z" fill="#16305e" />
    <BigBolt x={277} y={522} />
    <Port x={320} y={576} />

    {/* upper right arm */}
    <path d="M530 354l23-1 19-15 21-35 53-70 62-26 52 64 22 30 5 60-80 90-100 20z" fill="#2a61b6" stroke="none" />
    <path d="M568 323l25-20 11 13-31 24-2-3 2-4z" fill="#2458a8" />
    <path d="M552 353l52-41 9 12-42 34-14-4z" fill="url(#band)" />
    <path d="M573 359l41-33M570 357l43-35" strokeWidth="1.400" />
    <path d="M640 236l18-14 65 2-55 44z" fill="#275bab" />
    <path d="M668 268l55-44 10 12-57 43z" fill="url(#band)" />
    <path d="M676 279l57-43 27 33-25 22-9 13 1 9-19 12z" fill="#429dff" />
    <path d="M625 240l15-4 28 32 45 52-5 6-40-45z" fill="#3580f2" stroke="none" />
    <path d="M645 232l68 88M658 222l-14 10M648 231l60 94" />
    <path d="M700 330l27-17 35 46-36 28z" fill="url(#band)" stroke="none" />
    <path d="M593 303l45-16 48 50 32 44-37 30-68-85z" fill="#3881ff" stroke="none" />
    <path d="M574 359l39-33 68 85-43 35-40-46z" fill="#3881ff" stroke="none" />
    <path d="M681 411l37-30 32 40-36 36z" fill="#3881ff" />
    <path d="M714 457l36-35 14 16-37 31z" fill="#2c67c4" />
    <path d="M726 387l37-28 23-9 17 20-57 44z" fill="#2a60b5" />
    <path d="M746 414l57-44 21 27-55 47z" fill="url(#tube)" />
    <path d="M769 444l55-47 34 47-55 43z" fill="url(#fade)" />
    <path d="M781 350l36-34 41 53-34 28-21-27z" fill="#2a60b5" />
    <path d="M824 397l34-28 29 38-35 27 6 10z" fill="url(#fade)" />
    <path d="M735 290l39-31 7 10-40 31z" fill="url(#edge)" />
    <path d="M741 300l40-31 21 26-40 30z" fill="#3072df" />
    <path d="M762 325l40-30 15 21-37 30z" fill="url(#tube)" />
    <path d="M735 290c-9 5-11 15-7 24l32 39c7 6 16 3 20-7l-18-21-21-25z" fill="url(#round)" />
    <path d="M760 353c4 8 16 5 24-1M732 313c-3-7 2-12 9-13M751 339c-2-6 4-12 11-14M760 353c7 0 14-2 20-7" />
    <path d="M708 325l19-12M713 320l39 47 20 26 23 27 34 48M682 335l36 46 50 64 35 42M613 326l68 85 46 58M762 359l-36 28" />

    {/* housing foot, behind the plates */}
    <path d="M487 563l80-40 70-78 44-34 46 58 42 56 13 21-98 99H544l-70-85z" fill="#1e3b70" stroke="none" />
    <path d="M438 537l42 6 40 26-50 4z" fill="#1b3f7e" stroke="none" />

    {/* lower right plates */}
    <path d="M858 445l21 26-30 23-20-26z" fill="#2f72dc" />
    <path d="M829 468l20 26-26 21-20-28z" fill="#2f72dc" />
    <path d="M879 471l10 12-58 45-8-13z" fill="url(#edge)" />
    <path d="M849 494l10 12" />
    <path d="M764 438l39 49 5 9-39 29-42-56z" fill="#25508f" />
    <path d="M769 525l39-29 9 12-38 29z" fill="#1e4079" />
    <path d="M779 537l38-29 14 20-39 30z" fill="#16233b" />

    <path d="M637 445l44-34 26 35-47 36z" fill="#2b63bb" />
    <path d="M660 482l47-36 20 22-59 50z" fill="url(#tube)" />
    <path d="M668 518l59-49 6 12-50 38z" fill="#1b396c" />
    <path d="M683 518l49-37 8 9-57 40z" fill="#3881ff" />
    <path d="M683 530l57-40 20 22-112 86-50-10z" fill="#1e4079" />

    {/* left web and pocket */}
    <path d="M487 563l13-8 68 18-48 35z" fill="#2a61b8" />
    <path d="M463 545l24 18 45 61 3 6-10-2-65-82z" fill="#24529c" />
    <path d="M518 607l50-34 22 52-48 20-12-17z" fill="#1d3a6e" />
    <path d="M463 541l24 22 18-9z" fill="#3881ff" />
    <path d="M505 554c24 14 42 18 62 20l-10-22z" fill="#24529c" />
    <path d="M527 562l5 1v6l-5-1z" fill="#d9dde2" stroke="none" />
    <path d="M559 553c1-6 5-8 8-9l57-29c4-1 6 0 8 2l24 37-60 56-8-2z" fill="#3a83f5" />
    <path d="M566 558c-2-7 2-10 6-12l54-29 23 36-53 52z" fill="#1d3866" />
    <path d="M569 562c-5-8 0-12 5-14l46-26 5 7-48 27c-3 2-6 3-5 9z" fill="#2a64bf" strokeWidth=".8" />
    <path d="M574 560l20 42" stroke="#2b66c4" strokeWidth="2" />
    <path d="M561 562l28 47" />

    {/* lobe wall */}
    <path d="M632 515l18-40 33 45c2 14 0 18-3 22-8 9-20 14-32 6z" fill="url(#wall)" />
    <path d="M638 444l22 38-8-4c-10-10-15-20-14-34z" fill="#3176e8" />

    {/* rounded pad */}
    <path d="M594 645c-8-18-8-32 9-46l27-27 26-19 84-63 20 22 22 34-112 88-10 11z" fill="#214a8f" />
    <g stroke="#3f8bf5" strokeWidth="4">
      <path d="M599 638c-7-16 0-28 14-40l22-20 104-82" />
      <path d="M619 640c-8-16-2-28 14-41l119-94" />
      <path d="M631 640c-8-12-4-25 12-37l114-91" />
    </g>
    <g stroke="#7ec4ff" strokeWidth="1">
      <path d="M615 595l20-17 104-82M635 597l117-92" />
    </g>
    <path d="M593 630c-2-12 6-22 18-32l22-21 107-85M603 640c-7-16 0-26 12-36l24-21 104-82M610 645c-12-22-2-34 18-50l121-95M624 641c-8-16-2-27 14-40l117-91" />
    <path d="M648 645c-14-4-18-18-8-32l10-10 110-89 22 32-110 88c-8 7-12 11-16 11z" fill="#1d3868" />
    <ellipse cx="661" cy="618" rx="23" ry="15" transform="rotate(-38 661 618)" fill="#e0d91a" />
    <ellipse cx="660" cy="616" rx="20" ry="12" transform="rotate(-38 660 616)" fill="#7a7410" />
    <ellipse cx="658" cy="614" rx="18" ry="10" transform="rotate(-38 658 614)" fill="url(#glow)" />

    <path d="M729 585l16 10c6 8 9 17 9 29-2 14-9 19-14 21h-43l-1-34z" fill="url(#wall)" />
    <path d="M696 612l-36 33h62z" fill="#1d3868" stroke="none" />
    <path d="M782 546l10 12-46 36-15 9-1-16z" fill="url(#band)" />
    <path d="M698 613l24 28" stroke="#3f86f0" strokeWidth="2" />
    <path d="M722 642c18 4 30-14 27-38M780 549l-50 40" />

    {/* flange */}
    <path d="M435 536l24 2 20 26c-10 5-22 4-32-7z" fill="url(#wall)" />
    <path d="M474 545c30 10 80 16 115-12 24-20 50-18 57-40 1-16-5-19-8-30 2-34-16-74-52-96l-60 60z" fill="#1b3f7e" />
    <path d="M495 372c11-6 7-22 17-30 9-8 25-8 31 4 5 8 11 12 20 12 22 3 46 18 60 44 10 17 13 33 12 52 0 14 10 17 12 26 2 12-9 21-22 23-10 2-15 6-22 12-30 26-64 36-97 33-18-2-24-12-46-11-14 1-27-3-33-14-5-9-1-19 5-25 2-17-2-32 2-54 6-34 27-59 61-72z" fill="#3881ff" />
    <ellipse cx="531" cy="452" rx="56" ry="49" transform="rotate(-35 531 452)" fill="#1c4384" />
    <ellipse cx="526" cy="447" rx="55" ry="48" transform="rotate(-35 526 447)" fill="#3881ff" />
    <ellipse cx="527" cy="447" rx="36" ry="31" transform="rotate(-35 527 447)" fill="#173166" />
    <ellipse cx="529" cy="449" rx="34" ry="30" transform="rotate(-35 529 449)" fill="#8c8c8c" />
    <ellipse cx="530" cy="450" rx="25" ry="21" transform="rotate(-35 530 450)" fill="#3f3f3f" />
    <ellipse cx="533" cy="454" rx="21.500" ry="17" transform="rotate(-35 533 454)" fill="#3881ff" />
    <Bolt x={522} y={356} />
    <Bolt x={620} y={478} />
    <Bolt x={447} y={514} />

    {/* top fittings */}
    <BigBolt x={608} y={257} />
    <path d="M686 298l22 28c2 12 1 20-7 30l-28-20z" fill="#1d3d73" />
    <Port x={652} y={314} />
    <path d="M664 236c8 16 32 12 44-4 6-8 6-16 2-24z" fill="#1b3b72" />
    <ellipse cx="683" cy="217" rx="28" ry="25" transform="rotate(-35 683 217)" fill="#3478ea" />
    <ellipse cx="683" cy="217" rx="24" ry="21" transform="rotate(-35 683 217)" fill="#f4ee1e" />
    <ellipse cx="685" cy="219" rx="20" ry="17" transform="rotate(-35 685 219)" fill="url(#brass)" />
    <path d="M677 235c-2-11 10-20 26-19-1 11-14 21-26 19z" fill="url(#glow)" />
    <path d="M673 231c0-11 13-20 30-19" stroke="#e8e11a" />

    {/* engraved marks */}
    <g fill="#d8202c" stroke="#5a1030" strokeWidth=".6" fontFamily="Open Sans, sans-serif" fontSize="29" textAnchor="middle">
      <text transform="translate(679 371) rotate(-38)">(B)</text>
      <text transform="translate(357 624) rotate(-38)">(B)</text>
    </g>

    {/* axis marker */}
    <g stroke="none">
      <path d="M318 583l-9-12-5 3-5-16 14 9-3 3 11 10z" fill="#15b52a" />
      <path d="M318 576l12-10-3-3 14-4-7 12-3-3-10 12z" fill="#1b43e0" />
      <path d="M314 582l6-2 8 7-3 8-8-3z" fill="#e11414" />
      <circle cx="323" cy="588" r="4" fill="#a50d0d" />
    </g>
  </svg>
);

/* ---------- page ---------- */

const Workspace = () => (
  <main className="flex min-w-0 flex-1 flex-col pl-1">
    <div className="flex min-h-0 flex-1">
      <div className="min-w-0 flex-1 overflow-hidden bg-[#c0c0c0]">
        <Model3D />
      </div>
      <VScroll className="border-t border-[#f8f8f8]">
        <span className="flex-[169]" />
        <span className="h-[17px] bg-[#cdcdcd]" />
        <span className="flex-[246]" />
      </VScroll>
    </div>
    <div className="flex h-[19px] shrink-0 items-center bg-linear-to-r from-[#d5e2f2] to-[#ecf4fc] pr-4">
      <button type="button" className="relative ml-1.5 h-full w-[54px] text-[#111]">
        <svg viewBox="0 0 54 19" aria-hidden="true" className="absolute inset-0 size-full" fill="none">
          <path d="M1 0l5 14q1 2.500 4 2.500h34q3 0 4-2.500L53 0" fill="#e4edf8" stroke="#93a9c7" />
        </svg>
        <span className="relative">Model</span>
      </button>
      <div className="ml-auto"><DownBadge label="Sheets" /></div>
      <span className="mr-0.5 ml-2 h-4 border-l-2 border-dotted border-[#7d95b8]" />
      <HScroll className="w-[33%] border-t border-[#f8f8f8]">
        <span className="flex-[58]" />
        <span className="w-[17px] bg-[#cdcdcd]" />
        <span className="flex-[157]" />
      </HScroll>
    </div>
  </main>
);

const StatusBar = () => (
  <footer className="flex h-[21px] shrink-0 items-center border-t-2 border-[#8f9bac] bg-linear-to-b from-[#f4f8fd] to-[#c5dbf2] text-[#1f3d86]">
    <span className="w-[41%] pl-[7px]">3D model.SLDPRT</span>
    <span className="w-[101px] border-l border-[#eaf2fb] pl-1">2/18</span>
    <div className="flex items-center gap-1 text-[#222]">
      <Icon>
        <path d="M3.500 13V6c0-5 7-5 7 0v7" stroke="#333" strokeWidth="3" />
        <path d="M3.500 12V6c0-4 7-4 7 0v6" stroke="#aab" />
        <path d="M12 12h3v3h-3z" fill="#111" stroke="none" />
      </Icon>
      <Icon>
        <path d="M1 1h2v2H1zM5 1h2v2H5zM9 1h2v2H9zM13 1h2v2h-2zM1 7h2v2H1zM5 7h2v2H5zM9 7h2v2H9zM13 7h2v2h-2zM1 13h2v2H1zM5 13h2v2H5zM9 13h2v2H9zM13 13h2v2h-2z" fill="#333" stroke="none" />
      </Icon>
      <Icon>
        <path d="M2 13.500h12M8 3v10" stroke="#222" strokeWidth="1.300" />
      </Icon>
      <Icon>
        <circle cx="6.500" cy="9.500" r="4.500" stroke="#222" />
        <path d="M6 10.500L13 3M6 9.500h9M13 3l-4 1" stroke="#222" strokeWidth="1.300" />
      </Icon>
    </div>
    <span className="pl-[7px]">(-0,9488094; -0,3143234; 0,293464)</span>
    <span className="ml-auto h-full w-[121px] border-l border-[#eaf2fb]" />
    <span className="flex h-full w-20 items-end justify-end border-l border-[#eaf2fb] p-1">
      <svg viewBox="0 0 11 11" aria-hidden="true" className="size-[11px]">
        <path d="M8 0h2v2H8zM4 4h2v2H4zM8 4h2v2H8zM0 8h2v2H0zM4 8h2v2H4zM8 8h2v2H8z" fill="#6d88b0" />
      </svg>
    </span>
  </footer>
);

export default function App() {
  return (
    <div className="flex h-screen flex-col overflow-hidden border-r-[3px] border-b-2 border-l-2 border-[#0078d7] bg-[#d7e5f4] font-['Open_Sans','Noto_Sans',sans-serif] text-[11px] leading-4">
      <TitleBar />
      <TabRow />
      <Ribbon />
      <div className="flex h-7 shrink-0 items-end justify-between bg-linear-to-r from-[#cfdff0] to-[#eaf4fe] pl-1">
        <div className="flex h-6 items-center gap-2 rounded-t-[3px] border border-r-4 border-b-0 border-[#9fb4d0] bg-[#d6e4f3] pr-1 pl-[7px] text-[#111]">
          3D model.SLDPRT
          <button type="button" aria-label="Close document" className="flex size-[17px] items-center justify-center rounded-[3px] border border-[#8aa4c8] bg-[#e8f0f9]">
            <CrossBadge />
          </button>
        </div>
        <div className="pr-1.5 pb-1"><DownBadge label="Documents" /></div>
      </div>
      <div className="flex min-h-0 flex-1">
        <StructurePanel />
        <Workspace />
      </div>
      <StatusBar />
    </div>
  );
}
